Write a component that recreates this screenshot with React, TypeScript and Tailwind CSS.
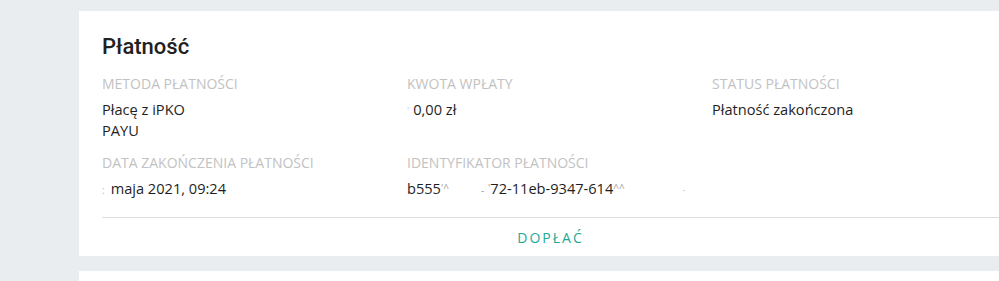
import React from 'react';

const Field: React.FC<{ label: string; children: React.ReactNode }> = ({ label, children }) => (
  <div>
    <div className="text-[14px] leading-[20px] text-[#c2c2c2] uppercase">{label}</div>
    <div className="mt-[5px] text-[14.6px] leading-[21px] text-[#1f1f1f] whitespace-nowrap">{children}</div>
  </div>
);

const App: React.FC = () => {
  return (
    <div
      className="w-[999px] h-[281px] overflow-hidden bg-[#e9edf0] pt-[11px] pl-[79px]"
      style={{ fontFamily: '"Open Sans", "Liberation Sans", sans-serif' }}
    >
      <div className="w-[943px] bg-white px-[23px] pt-[21px]">
        <h2 className="text-[22px] leading-[30px] font-medium text-[#212121]" style={{ fontFamily: 'Roboto, "Liberation Sans", sans-serif' }}>
          Płatność
        </h2>
        <div className="mt-[12px] grid grid-cols-[305px_305px_1fr] gap-y-[12px]">
          <Field label="Metoda płatności">
            <div>Płacę z iPKO</div>
            <div>PAYU</div>
          </Field>
          <Field label="Kwota wpłaty">
            <span className="text-[#cfcfcf] text-[10px] mr-[4px]">'</span>0,00 zł
          </Field>
          <Field label="Status płatności">Płatność zakończona</Field>
          <Field label="Data zakończenia płatności">
            <span className="text-[#bdbdbd] text-[10px] mr-[6px]">:</span>maja 2021, 09:24
          </Field>
          <Field label="Identyfikator płatności">
            <span>b555</span>
            <span className="text-[#9e9e9e] text-[10px] align-top">'^</span>
            <span className="inline-block w-[32px]" />
            <span className="text-[#9e9e9e] text-[10px]">-</span>
            <span className="text-[#9e9e9e] text-[10px] align-top ml-[4px]">'</span>
            <span>72-11eb-9347-614</span>
            <span className="text-[#9e9e9e] text-[10px] align-top">^^</span>
            <span className="inline-block w-[58px]" />
            <span className="text-[#bdbdbd] text-[10px]">·</span>
          </Field>
          <div />
        </div>
        <div className="mt-[16px] border-t border-[#dedede]" />
        <div className="flex justify-center h-[38px] items-center">
          <button className="text-[14px] font-medium tracking-[2px] text-[#1ea896] uppercase">Dopłać</button>
        </div>
      </div>
      <div className="mt-[15px] w-[943px] h-[40px] bg-white" />
    </div>
  );
};

export default App;
